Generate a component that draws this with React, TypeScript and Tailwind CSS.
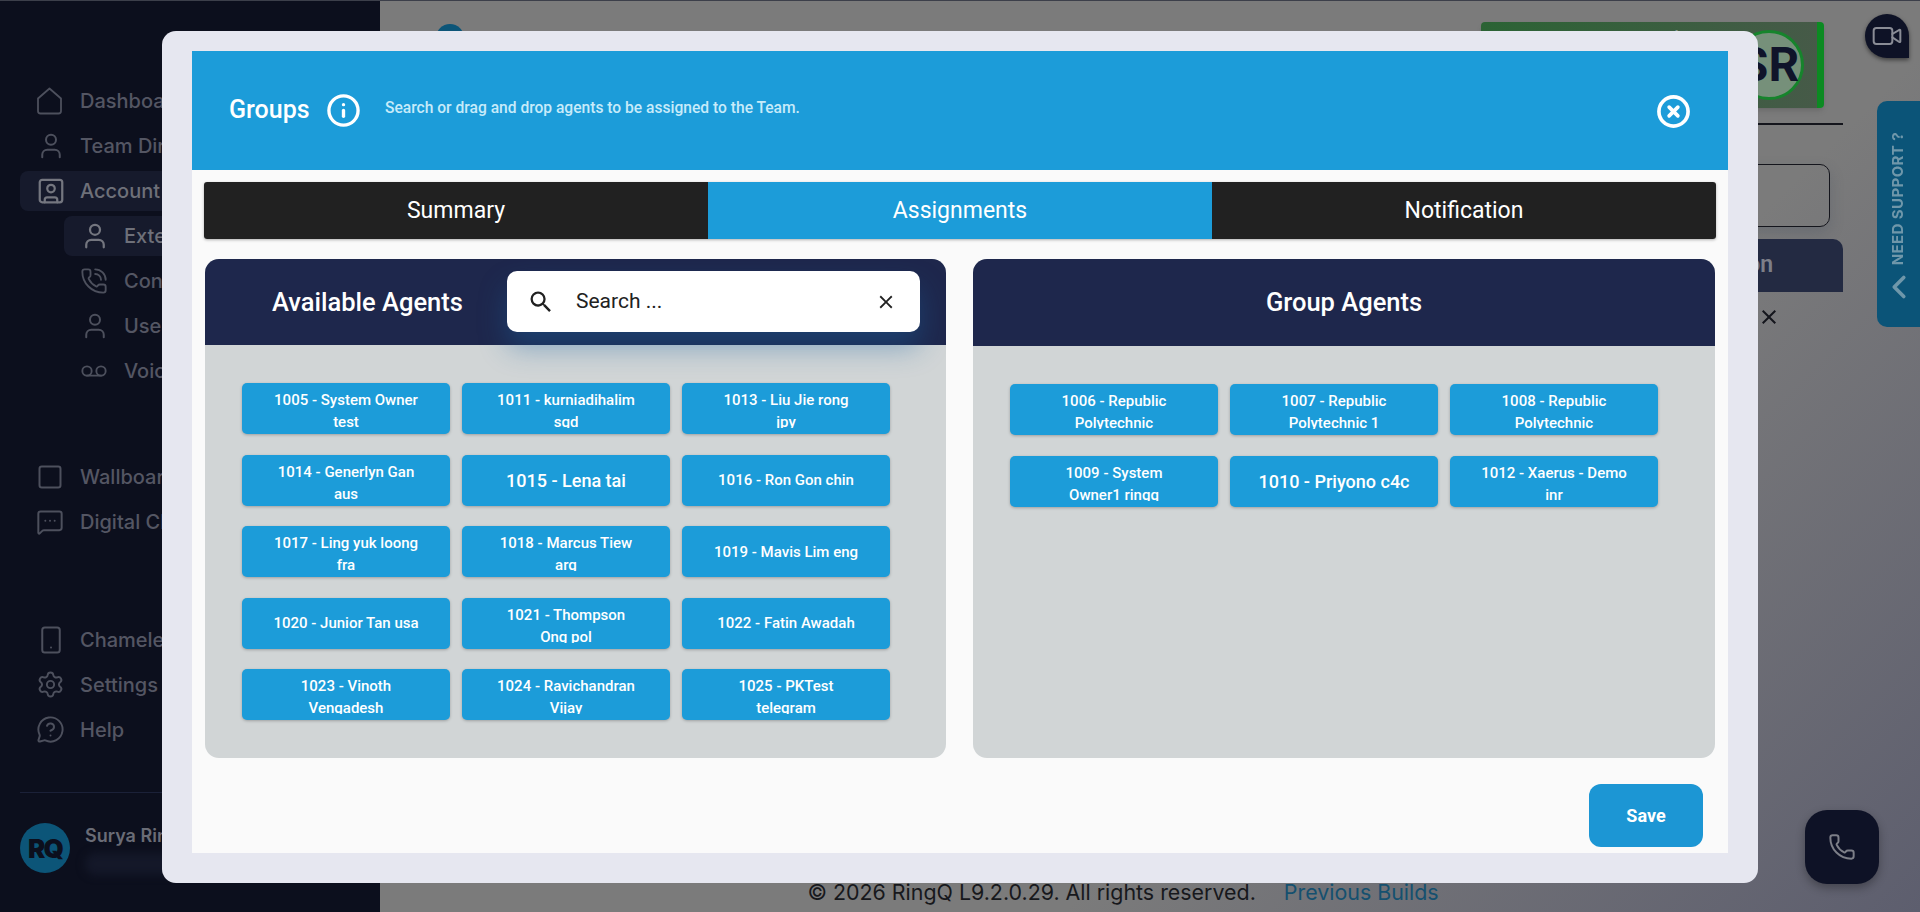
import React from 'react';
import {
  CircleX,
  Info,
  MessageCircleQuestion,
  MessageSquareMore,
  PhoneCall,
  Phone,
  Settings,
  Smartphone,
  Square,
  SquareUser,
  User,
  Video,
  Voicemail,
  ChevronLeft,
} from 'lucide-react';
import { MdClose, MdSearch } from 'react-icons/md';

interface Agent {
  label: string;
  big?: boolean;
  single?: boolean;
}

const availableAgents: Agent[] = [
  { label: '1005 - System Owner test' },
  { label: '1011 - kurniadihalim sgd' },
  { label: '1013 - Liu Jie rong jpy' },
  { label: '1014 - Generlyn Gan aus' },
  { label: '1015 - Lena tai', big: true, single: true },
  { label: '1016 - Ron Gon chin', single: true },
  { label: '1017 - Ling yuk loong fra' },
  { label: '1018 - Marcus Tiew arg' },
  { label: '1019 - Mavis Lim eng', single: true },
  { label: '1020 - Junior Tan usa', single: true },
  { label: '1021 - Thompson Ong pol' },
  { label: '1022 - Fatin Awadah', single: true },
  { label: '1023 - Vinoth Vengadesh' },
  { label: '1024 - Ravichandran Vijay' },
  { label: '1025 - PKTest telegram' },
];

const groupAgents: Agent[] = [
  { label: '1006 - Republic Polytechnic' },
  { label: '1007 - Republic Polytechnic 1' },
  { label: '1008 - Republic Polytechnic' },
  { label: '1009 - System Owner1 ringq' },
  { label: '1010 - Priyono c4c', big: true, single: true },
  { label: '1012 - Xaerus - Demo inr' },
];

function HomeIcon() {
  return (
    <svg width="27" height="28" viewBox="0 0 27 28" fill="none" stroke="currentColor" strokeWidth="1.8" strokeLinejoin="round">
      <path d="M2 11.5 13.5 1.5 25 11.5V24a2.5 2.5 0 0 1-2.5 2.5h-18A2.5 2.5 0 0 1 2 24Z" />
    </svg>
  );
}

function NavItem({ icon, label, sub, active }: { icon: React.ReactNode; label: string; sub?: boolean; active?: boolean }) {
  return (
    <div className={`h-[45px] flex items-center ${sub ? 'pl-[44px]' : ''}`}>
      <div className={`w-full h-[40px] flex items-center rounded-lg pl-[16px] ${active ? 'bg-[#161a2c]' : ''}`}>
        <span className={`w-[44px] shrink-0 flex ${active ? 'text-[#74767f]' : 'text-[#4d505d]'}`}>{icon}</span>
        <span className={`text-[20px] font-medium whitespace-nowrap ${active ? 'text-[#6e7079]' : 'text-[#545663]'}`}>{label}</span>
      </div>
    </div>
  );
}

function AgentCard({ agent }: { agent: Agent }) {
  return (
    <div
      className={`h-[51px] overflow-hidden rounded-[5px] bg-[#1c9cd9] shadow-[0_1px_3px_rgba(0,0,0,0.25)] px-[30px] flex justify-center text-center text-white font-medium ${
        agent.single ? 'items-center' : 'pt-[6px]'
      } ${agent.big ? 'text-[18px]' : 'text-[15px] leading-[22px]'}`}
    >
      {/* second line gets cut just under the baseline in the original */}
      <span className={agent.single ? 'whitespace-nowrap' : 'block h-[39px] overflow-hidden'}>{agent.label}</span>
    </div>
  );
}

function AgentGrid({ agents }: { agents: Agent[] }) {
  return (
    <div className="grid grid-cols-[208px_208px_208px] gap-x-[12px] gap-y-[20.6px] pl-[37px] pt-[38px]">
      {agents.map((agent) => (
        <AgentCard key={agent.label} agent={agent} />
      ))}
    </div>
  );
}

export default function App() {
  const tabs = ['Summary', 'Assignments', 'Notification'];

  return (
    <div className="h-[912px] w-[1920px] overflow-hidden flex border-t border-t-[#3c3f4a] font-['Roboto',sans-serif]">
      <aside className="w-[380px] shrink-0 bg-[#0c0f1d] pt-[77px] px-[20px] font-['Inter',sans-serif]">
        <NavItem icon={<HomeIcon />} label="Dashboard" />
        <NavItem icon={<User size={30} strokeWidth={1.6} />} label="Team Directory" />
        <NavItem active icon={<SquareUser size={30} strokeWidth={1.8} />} label="Account Settings" />
        <NavItem sub active icon={<User size={30} strokeWidth={1.8} />} label="Extensions" />
        <NavItem sub icon={<PhoneCall size={28} strokeWidth={1.6} />} label="Contacts" />
        <NavItem sub icon={<User size={30} strokeWidth={1.6} />} label="Users" />
        <NavItem sub icon={<Voicemail size={28} strokeWidth={1.6} />} label="Voicemail" />
        <div className="h-[61px]" />
        <NavItem icon={<Square size={28} strokeWidth={1.7} />} label="Wallboard" />
        <NavItem icon={<MessageSquareMore size={28} strokeWidth={1.7} />} label="Digital Channels" />
        <div className="h-[73px]" />
        <NavItem icon={<Smartphone size={30} strokeWidth={1.6} />} label="Chameleon" />
        <NavItem icon={<Settings size={29} strokeWidth={1.6} />} label="Settings" />
        <NavItem icon={<MessageCircleQuestion size={29} strokeWidth={1.6} />} label="Help" />
        <div className="mt-[40px] border-t border-t-[#1b2138] pt-[30px] flex items-start gap-[15px]">
          <div className="w-[50px] h-[50px] shrink-0 rounded-full bg-[#0c5578] flex items-center justify-center text-[#0c0f1d] text-[26px] font-black tracking-[-2px]">RQ</div>
          <div className="-mt-[1px]">
            <div className="text-[18px] font-semibold text-[#6a6c76]">Surya Ringq</div>
            <div className="mt-[4px] h-[22px] w-[120px] rounded-full bg-[#141829] blur-[4px]" />
          </div>
        </div>
      </aside>

      <main className="flex-1 relative bg-[linear-gradient(135deg,#7b7b7b_65%,#5d5e6e_100%)] pl-[23px] pr-[77px] flex flex-col">
        <div className="h-[124px] border-b-2 border-b-[#14151c] flex items-start justify-between pt-[21px] pr-[19px]">
          <div className="ml-[33px] mt-[2px] w-[28px] h-[28px] rounded-full bg-[#0c5578]" />
          <div className="w-[343px] h-[86px] rounded-[4px] bg-[linear-gradient(90deg,#2b6334,#465a48)] border-r-[7px] border-r-[#0c8a22] flex items-center justify-end pr-[13px] shadow-md">
            <span className="self-start mt-[2px] mr-[18px] text-[18px] font-semibold text-[#8a9a8c] whitespace-nowrap">Surya Ring Q</span>
            <div className="w-[70px] h-[70px] rounded-full border-[3px] border-[#16842c] bg-[#76907a] flex items-center justify-center text-[48px] font-bold text-[#10142a]">SR</div>
          </div>
        </div>
        <div className="mt-[39px] mr-[13px] h-[63px] rounded-[10px] border-[1.5px] border-[#14151c] shadow-[0_6px_14px_rgba(60,70,90,0.25)]" />
        <div className="mt-[12px] h-[53px] rounded-tr-[10px] bg-[#232a42] flex items-center justify-end pr-[70px] text-[23px] font-semibold text-[#7d7f88]">Action</div>
        <div className="mt-[13px] pr-[62px] flex justify-end text-[#14151c]">
          <MdClose size={24} />
        </div>
        <footer className="mt-auto pb-[4px] flex justify-center gap-[28px] text-[21.4px] font-['Inter',sans-serif]">
          <span className="text-[#17181c]">© 2026 RingQ L9.2.0.29. All rights reserved.</span>
          <span className="text-[#15506f]">Previous Builds</span>
        </footer>

        <div className="absolute right-[11px] top-[13px] w-[44px] h-[44px] rounded-[22px] rounded-br-none bg-[#0e1226] shadow-[0_2px_4px_rgba(0,0,0,0.5)] flex items-center justify-center text-[#8a8c96]">
          <Video size={32} strokeWidth={1.5} />
        </div>
        <div className="absolute right-0 top-[100px] w-[43px] h-[226px] rounded-l-[10px] bg-[#0b5478] flex flex-col items-center justify-end gap-[3px] pb-[21px] text-[#6f97aa]">
          <span className="[writing-mode:vertical-rl] rotate-180 text-[15px] font-bold tracking-[0.4px] font-['Inter',sans-serif] whitespace-nowrap">NEED SUPPORT ?</span>
          <ChevronLeft size={38} strokeWidth={2.3} />
        </div>
        <div className="absolute right-[41px] top-[809px] w-[74px] h-[74px] rounded-[22px] bg-[#0e1226] shadow-[0_4px_10px_rgba(0,0,0,0.3)] flex items-center justify-center text-[#7d7f88]">
          <Phone size={28} strokeWidth={1.7} />
        </div>
      </main>

      <div className="fixed inset-0 flex items-center justify-center pt-[2px]">
        <div className="w-[1596px] h-[852px] rounded-[14px] bg-[#e6e7f0] px-[30px] pt-[20px] pb-[30px]">
          <div className="h-full bg-[#fafafa] flex flex-col">
            <div className="h-[119px] shrink-0 bg-[#1c9cd9] pl-[37px] pr-[37px] flex items-center text-white">
              <h1 className="text-[25px] font-medium w-[97px] -mt-[2px]">Groups</h1>
              <Info size={35} strokeWidth={2.3} className="shrink-0 -mt-[1px]" />
              <p className="ml-[24px] text-[15.6px] font-medium text-[#c7ebfa] -mt-[3px]">Search or drag and drop agents to be assigned to the Team.</p>
              <CircleX size={35} strokeWidth={2.5} className="ml-auto mt-[2px]" />
            </div>

            <div className="mt-[12px] mx-[12px] h-[57px] shrink-0 flex rounded-[3px] shadow-[0_1px_3px_rgba(0,0,0,0.3)] overflow-hidden text-[23px] text-white">
              {tabs.map((tab) => (
                <div key={tab} className={`flex-1 flex items-center justify-center pt-[2px] ${tab === 'Assignments' ? 'bg-[#1c9cd9]' : 'bg-[#212121]'}`}>
                  {tab}
                </div>
              ))}
            </div>

            <div className="mt-[20px] ml-[13px] mr-[13px] h-[499px] shrink-0 flex gap-[27px]">
              <section className="w-[741px] rounded-[14px] bg-[#d1d5d6] overflow-hidden">
                <div className="h-[86px] bg-[#1e274c] flex items-center relative">
                  <h2 className="ml-[67px] w-[235px] text-[25.5px] font-medium text-white whitespace-nowrap">Available Agents</h2>
                  <div className="h-[61px] w-[413px] -mt-[1px] rounded-[10px] bg-white flex items-center pl-[20px] pr-[23px] text-[#212121] shadow-[0_16px_28px_rgba(28,100,160,0.4)] relative z-10">
                    <MdSearch size={28} className="shrink-0" />
                    <span className="ml-[21px] mt-[1px] text-[21px]">Search ...</span>
                    <MdClose size={22} className="ml-auto" />
                  </div>
                </div>
                <AgentGrid agents={availableAgents} />
              </section>
              <section className="w-[742px] rounded-[14px] bg-[#d1d5d6] overflow-hidden">
                <div className="h-[87px] bg-[#1e274c] flex items-center justify-center">
                  <h2 className="text-[25.5px] font-medium text-white">Group Agents</h2>
                </div>
                <AgentGrid agents={groupAgents} />
              </section>
            </div>

            <div className="flex-1 flex items-start justify-end pr-[25px] pt-[26px]">
              <button className="w-[114px] h-[63px] rounded-[12px] bg-[#1c96d4] text-white text-[18px] font-bold">Save</button>
            </div>
          </div>
        </div>
      </div>
    </div>
  );
}
